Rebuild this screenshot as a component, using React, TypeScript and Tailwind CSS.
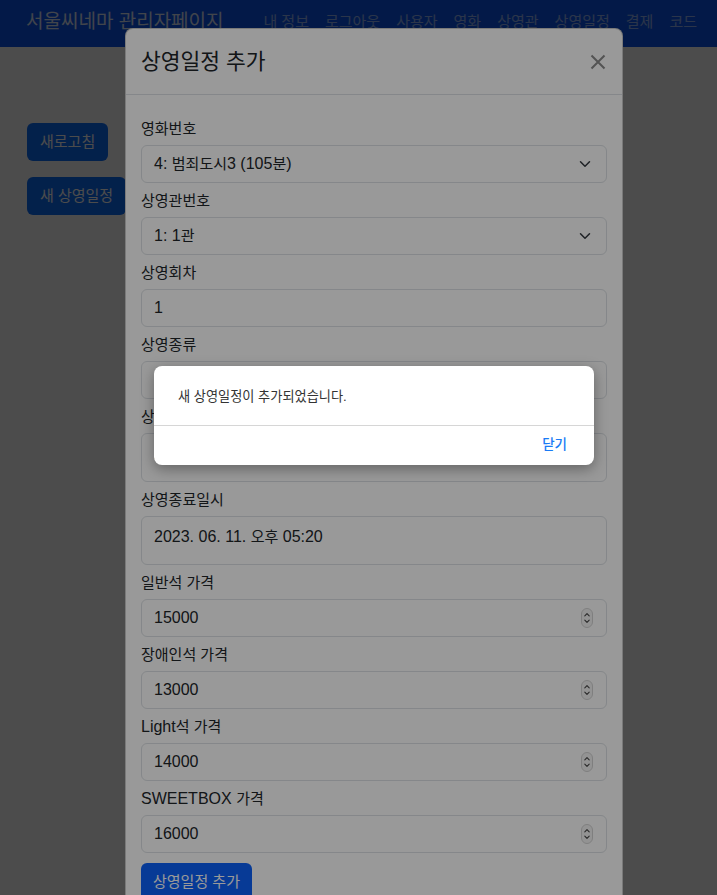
import React from "react"

const K = ({ children }: { children: React.ReactNode }) => (
    <span className="text-[15px] leading-none">{children}</span>
)

const Chevron = () => (
    <svg width="16" height="12" viewBox="0 0 16 16" className="shrink-0">
        <path d="m2 5 6 6 6-6" fill="none" stroke="#343a40" strokeWidth="2" strokeLinecap="round" strokeLinejoin="round" />
    </svg>
)

const Spinner = () => (
    <svg width="12" height="20" viewBox="0 0 12 20" className="shrink-0">
        <rect x="0.5" y="0.5" width="11" height="19" rx="5.5" fill="#f6f6f6" stroke="#d4d4d4" />
        <path d="M3.8 7.8 6 5.6 8.2 7.8" fill="none" stroke="#444" strokeWidth="1.1" strokeLinecap="round" strokeLinejoin="round" />
        <path d="M3.8 12.2 6 14.4 8.2 12.2" fill="none" stroke="#444" strokeWidth="1.1" strokeLinecap="round" strokeLinejoin="round" />
    </svg>
)

interface FieldProps {
    label: React.ReactNode
    children: React.ReactNode
}

function Field({ label, children }: FieldProps) {
    return (
        <div>
            <label className="block h-[34px] pt-[8px] leading-[20px] text-[16px]">{label}</label>
            {children}
        </div>
    )
}

function Box({ children, right }: { children: React.ReactNode; right?: React.ReactNode }) {
    return (
        <div className="flex h-[38px] items-center justify-between rounded-md border border-[#dee2e6] bg-white pl-3 pr-[13px] text-[16px] leading-6">
            <span>{children}</span>
            {right}
        </div>
    )
}

function DateBox({ children }: { children: React.ReactNode }) {
    return (
        <div className="h-[49px] rounded-md border border-[#dee2e6] bg-white px-3 pt-[8px] text-[16px] leading-6">
            {children}
        </div>
    )
}

const navItems = ["내 정보", "로그아웃", "사용자", "영화", "상영관", "상영일정", "결제", "코드"]

export default function App() {
    return (
        <div className="relative h-[895px] overflow-hidden bg-white font-['Liberation_Sans','Noto_Sans_CJK_KR',sans-serif] text-[#212529]">
            <nav className="flex h-[47px] items-center bg-[#0a55f0] pb-[3px] pl-[26px] pr-[20px]">
                <span className="text-[19px] text-white/85">서울씨네마 관리자페이지</span>
                <ul className="ml-auto flex gap-4 text-[15px] text-white/55">
                    {navItems.map((n) => (
                        <li key={n}>{n}</li>
                    ))}
                </ul>
            </nav>

            <main className="flex flex-col items-start gap-4 px-[27px] pt-[76px]">
                <button className="h-[38px] rounded-md bg-[#0d6efd] px-[13px] text-[15px] text-white">새로고침</button>
                <button className="h-[38px] rounded-md bg-[#0d6efd] px-[13px] text-[15px] text-white">새 상영일정</button>
            </main>

            {/* modal backdrop */}
            <div className="absolute inset-0 bg-black/50" />

            <div className="absolute left-[125px] top-[28px] w-[498px] rounded-lg border border-black/20 bg-white">
                <div className="flex h-[66px] items-center justify-between border-b border-[#dee2e6] pl-[15px] pr-4">
                    <h5 className="text-[21.5px] leading-[30px]">상영일정 추가</h5>
                    <svg width="16" height="16" viewBox="0 0 16 16">
                        <path d="M1.5 1.5l13 13M14.5 1.5l-13 13" stroke="#8a8a8a" strokeWidth="2" />
                    </svg>
                </div>
                <div className="px-[15px] pt-4">
                    <Field label={<K>영화번호</K>}>
                        <Box right={<Chevron />}>
                            4: <K>범죄도시</K>3 (105<K>분</K>)
                        </Box>
                    </Field>
                    <Field label={<K>상영관번호</K>}>
                        <Box right={<Chevron />}>
                            1: 1<K>관</K>
                        </Box>
                    </Field>
                    <Field label={<K>상영회차</K>}>
                        <Box>1</Box>
                    </Field>
                    <Field label={<K>상영종류</K>}>
                        <Box>2D</Box>
                    </Field>
                    <Field label={<K>상영시작일시</K>}>
                        <DateBox>
                            2023. 06. 11. <K>오후</K> 03:20
                        </DateBox>
                    </Field>
                    <Field label={<K>상영종료일시</K>}>
                        <DateBox>
                            2023. 06. 11. <K>오후</K> 05:20
                        </DateBox>
                    </Field>
                    <Field label={<K>일반석 가격</K>}>
                        <Box right={<Spinner />}>15000</Box>
                    </Field>
                    <Field label={<K>장애인석 가격</K>}>
                        <Box right={<Spinner />}>13000</Box>
                    </Field>
                    <Field label={<>Light<K>석 가격</K></>}>
                        <Box right={<Spinner />}>14000</Box>
                    </Field>
                    <Field label={<>SWEETBOX <K>가격</K></>}>
                        <Box right={<Spinner />}>16000</Box>
                    </Field>
                    <button className="mt-[10px] h-[38px] rounded-md bg-[#0c62fb] px-3 text-[15px] text-white">상영일정 추가</button>
                </div>
            </div>

            {/* alert overlay */}
            <div className="absolute inset-0 bg-black/40" />

            <div className="absolute left-[154px] top-[366px] w-[440px] rounded-lg bg-white shadow-[0_4px_14px_rgba(0,0,0,0.35)]">
                <p className="pb-[18px] pl-6 pt-[21px] text-[13.2px] leading-[20px] text-[#333]">새 상영일정이 추가되었습니다.</p>
                <div className="border-t border-[#d6d6d6]" />
                <div className="flex h-[39px] items-center justify-end pr-[27px]">
                    <span className="text-[13.5px] font-medium text-[#1a7bf5]">닫기</span>
                </div>
            </div>
        </div>
    )
}
